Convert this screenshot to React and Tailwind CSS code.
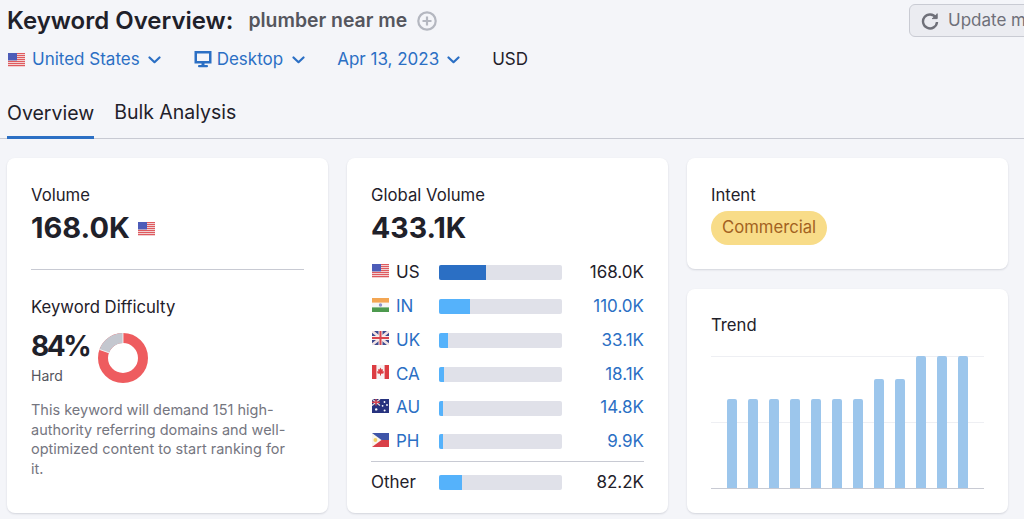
import React from "react";

const Us = ({ className = "" }) => (
  <svg viewBox="0 0 17 14" className={className} preserveAspectRatio="none">
    <rect width="17" height="14" fill="#f3dede" />
    {[0, 2, 4, 6, 8, 10, 12].map((y) => (
      <rect key={y} y={y} width="17" height="1.1" fill="#df5a5f" />
    ))}
    <rect width="9" height="7.4" fill="#4d5cb8" />
  </svg>
);
const In = () => (
  <svg viewBox="0 0 17 14" className="w-[17px] h-[14px]">
    <rect width="17" height="14" fill="#f6f6f6" />
    <rect width="17" height="4.6" fill="#f3a653" />
    <rect y="9.4" width="17" height="4.6" fill="#4d9a4e" />
    <circle cx="8.5" cy="7" r="1.7" fill="#8f93c9" />
  </svg>
);
const Uk = () => (
  <svg viewBox="0 0 17 14" className="w-[17px] h-[14px]">
    <rect width="17" height="14" fill="#3d4a8f" />
    <path d="M0 0L17 14M17 0L0 14" stroke="#f3e3e3" strokeWidth="2.6" />
    <path d="M8.5 0V14M0 7H17" stroke="#f5eeee" strokeWidth="4" />
    <path d="M8.5 0V14M0 7H17" stroke="#d9454d" strokeWidth="2" />
  </svg>
);
const Ca = () => (
  <svg viewBox="0 0 17 14" className="w-[17px] h-[14px]">
    <rect width="17" height="14" fill="#f7f3f3" />
    <rect width="4.4" height="14" fill="#dc3c42" />
    <rect x="12.6" width="4.4" height="14" fill="#dc3c42" />
    <path d="M8.5 2.6L9.5 4.6L11 4.2L10.6 6.6L12 6.2L11.4 8.4L9 8.8V10.6H8V8.8L5.6 8.4L5 6.2L6.4 6.6L6 4.2L7.5 4.6Z" fill="#dc3c42" />
  </svg>
);
const Au = () => (
  <svg viewBox="0 0 17 14" className="w-[17px] h-[14px]">
    <rect width="17" height="14" fill="#27337f" />
    <path d="M0 0L8 6.5M8 0L0 6.5" stroke="#e9dede" strokeWidth="1.2" />
    <path d="M4 0V6.5M0 3.2H8" stroke="#d9454d" strokeWidth="1.4" />
    <circle cx="4.2" cy="10.4" r="1.2" fill="#fff" />
    <circle cx="12.5" cy="3" r="0.9" fill="#fff" />
    <circle cx="15" cy="6" r="0.9" fill="#fff" />
    <circle cx="10.6" cy="6.8" r="0.9" fill="#fff" />
    <circle cx="12.6" cy="11.4" r="1" fill="#fff" />
  </svg>
);
const Ph = () => (
  <svg viewBox="0 0 17 14" className="w-[17px] h-[14px]">
    <rect width="17" height="7" fill="#3f55a8" />
    <rect y="7" width="17" height="7" fill="#d93f48" />
    <path d="M0 0L9.5 7L0 14Z" fill="#f8f6ee" />
    <circle cx="3.4" cy="7" r="1.9" fill="#f3cf62" />
  </svg>
);

const Chevron = () => (
  <svg viewBox="0 0 13 8" className="w-[13px] h-[8px] shrink-0" fill="none" stroke="#2b6fc4" strokeWidth="2.2" strokeLinecap="round" strokeLinejoin="round">
    <path d="M1.5 1.5L6.5 6.2L11.5 1.5" />
  </svg>
);

const rows = [
  { flag: <Us className="w-[17px] h-[14px]" />, code: "US", pct: 38, val: "168.0K", top: true },
  { flag: <In />, code: "IN", pct: 25, val: "110.0K" },
  { flag: <Uk />, code: "UK", pct: 7.5, val: "33.1K" },
  { flag: <Ca />, code: "CA", pct: 4, val: "18.1K" },
  { flag: <Au />, code: "AU", pct: 3, val: "14.8K" },
  { flag: <Ph />, code: "PH", pct: 3, val: "9.9K" },
];

const trend = [89, 89, 89, 89, 89, 89, 89, 109, 109, 132, 132, 132];

function Bar({ pct, dark }) {
  return (
    <div className="w-[123px] h-[15px] bg-[#e0e1e9] rounded-[2px] overflow-hidden shrink-0">
      <div className={dark ? "h-full bg-[#2b6fc4]" : "h-full bg-[#55b2fb]"} style={{ width: `${pct}%` }} />
    </div>
  );
}

export default function App() {
  return (
    <div className="w-[1024px] h-[519px] overflow-hidden bg-[#f4f5f9] text-[#1f212a] font-['Inter',sans-serif]">
      <div className="flex items-start h-[42px] pl-[7px] pt-[4px]">
        <div className="w-[902px] shrink-0 flex items-center h-[33px]">
          <h1 className="text-[24px] leading-[33px] font-semibold">Keyword Overview:</h1>
          <span className="ml-[15px] text-[19.4px] font-semibold text-[#55565e]">plumber near me</span>
          <svg viewBox="0 0 20 20" className="ml-[10px] w-[20px] h-[20px] shrink-0" fill="none" stroke="#b4b7c0" strokeWidth="2.2">
            <circle cx="10" cy="10" r="8.7" />
            <path d="M10 5.5V14.5M5.5 10H14.5" />
          </svg>
        </div>
        <div className="shrink-0 w-[140px] h-[33px] rounded-[6px] border border-[#c9cbd3] bg-[#ebecf1] flex items-center pl-[11px] gap-[9px] text-[#6f7079] text-[17px] whitespace-nowrap">
          <svg viewBox="0 0 18 18" className="w-[18px] h-[18px] shrink-0" fill="none" stroke="#6f7079" strokeWidth="2.4">
            <path d="M14.8 5.5A7 7 0 1 0 16 10" />
            <path d="M16.2 1.5V6.6H11" fill="#6f7079" strokeWidth="1" />
          </svg>
          <span>Update metrics</span>
        </div>
      </div>

      <div className="flex items-center h-[36px] pl-[8px] text-[17px] text-[#2b6fc4]">
        <Us className="w-[17px] h-[14px] shrink-0" />
        <span className="ml-[7px]">United States</span>
        <span className="ml-[8px]"><Chevron /></span>
        <svg viewBox="0 0 18 18" className="ml-[33px] w-[18px] h-[18px] shrink-0 -mt-[2px]" fill="#2b6fc4">
          <path fillRule="evenodd" d="M0.5 1H17.5V13.5H0.5ZM3 3.5V11H15V3.5Z" />
          <rect x="7.5" y="13" width="3" height="3" />
          <rect x="4" y="15" width="10" height="2.2" rx="1" />
        </svg>
        <span className="ml-[5px]">Desktop</span>
        <span className="ml-[9px]"><Chevron /></span>
        <span className="ml-[32px]">Apr 13, 2023</span>
        <span className="ml-[8px]"><Chevron /></span>
        <span className="ml-[32px] text-[#1f212a]">USD</span>
      </div>

      <div className="h-[61px] border-b border-[#c8cad3] pl-[7px] flex items-end gap-[20px] text-[19.5px] leading-[24px]">
        <div className="h-[39px] pt-[1px] border-b-[3px] border-[#2b6fc4] -mb-px">Overview</div>
        <div className="h-[39px] pt-[1px]">Bulk Analysis</div>
      </div>

      <div className="grid grid-cols-[321px_321px_321px] gap-[19px] pl-[7px] pt-[19px]">
        <div className="h-[355px] bg-white rounded-[8px] shadow-[0_1px_2px_rgba(30,35,60,0.15)] px-[24px] pt-[26px]">
          <div className="text-[16.7px] leading-[22px]">Volume</div>
          <div className="flex items-center gap-[8px] mt-[4px]">
            <span className="text-[29px] leading-[36px] font-bold">168.0K</span>
            <Us className="w-[17px] h-[14px] mt-[2px] shrink-0" />
          </div>
          <div className="border-t border-[#c8cad3] mt-[23px]" />
          <div className="text-[16.7px] leading-[22px] mt-[26px]">Keyword Difficulty</div>
          <div className="flex items-start mt-[10px]">
            <div>
              <div className="text-[28px] leading-[36px] font-bold tracking-[-2.5px]">84%</div>
              <div className="text-[14px] leading-[18px] text-[#55565e] mt-[3px]">Hard</div>
            </div>
            <svg viewBox="0 0 50 50" className="w-[50px] h-[50px] ml-[9px] mt-[5px] shrink-0">
              <circle cx="25" cy="25" r="20" fill="none" stroke="#ee5c5f" strokeWidth="10" />
              <path d="M25 5A20 20 0 0 0 6.2 18.2" fill="none" stroke="#c4c7cf" strokeWidth="10" />
              <path d="M25 0V10M1.5 16.5L11 19.8" stroke="#fff" strokeWidth="0.8" />
            </svg>
          </div>
          <p className="text-[14.5px] leading-[19.5px] text-[#75767f] mt-[15px] w-[262px]">
            This keyword will demand 151 high-authority referring domains and well-optimized content to start ranking for it.
          </p>
        </div>

        <div className="h-[355px] bg-white rounded-[8px] shadow-[0_1px_2px_rgba(30,35,60,0.15)] px-[24px] pt-[26px]">
          <div className="text-[16.7px] leading-[22px]">Global Volume</div>
          <div className="text-[28.5px] leading-[36px] font-bold mt-[4px]">433.1K</div>
          <div className="mt-[10px] flex flex-col">
            {rows.map((r) => (
              <div key={r.code} className="flex items-center h-[33.8px] text-[17px]">
                <span className="w-[25px] shrink-0 pl-[1px] -mt-[4px]">{r.flag}</span>
                <span className={r.top ? "w-[43px] shrink-0" : "w-[43px] shrink-0 text-[#2b6fc4]"}>{r.code}</span>
                <Bar pct={r.pct} dark={r.top} />
                <span className={r.top ? "flex-1 text-right" : "flex-1 text-right text-[#2b6fc4]"}>{r.val}</span>
              </div>
            ))}
          </div>
          <div className="border-t border-[#c8cad3] mt-[2px] flex items-center h-[42px] text-[17px]">
            <span className="w-[68px] shrink-0">Other</span>
            <Bar pct={19} />
            <span className="flex-1 text-right">82.2K</span>
          </div>
        </div>

        <div className="flex flex-col gap-[20px]">
          <div className="h-[111px] bg-white rounded-[8px] shadow-[0_1px_2px_rgba(30,35,60,0.15)] px-[24px] pt-[26px]">
            <div className="text-[16.7px] leading-[22px]">Intent</div>
            <div className="inline-flex items-center h-[34px] mt-[5px] px-[11px] rounded-full bg-[#f8dc88] text-[#a3621f] text-[16.7px]">Commercial</div>
          </div>
          <div className="h-[224px] bg-white rounded-[8px] shadow-[0_1px_2px_rgba(30,35,60,0.15)] px-[24px] pt-[25px]">
            <div className="text-[16.7px] leading-[22px]">Trend</div>
            <div className="relative h-[133px] mt-[20px] border-b border-[#c8cad3] border-t-0 flex items-end justify-between px-[16px]">
              <div className="absolute left-0 right-0 top-0 border-t border-[#eeeff3]" />
              <div className="absolute left-0 right-0 top-[66px] border-t border-[#eeeff3]" />
              {trend.map((h, i) => (
                <div key={i} className="relative w-[10px] bg-[#9cc6ec] rounded-t-[2px]" style={{ height: h }} />
              ))}
            </div>
          </div>
        </div>
      </div>
    </div>
  );
}
